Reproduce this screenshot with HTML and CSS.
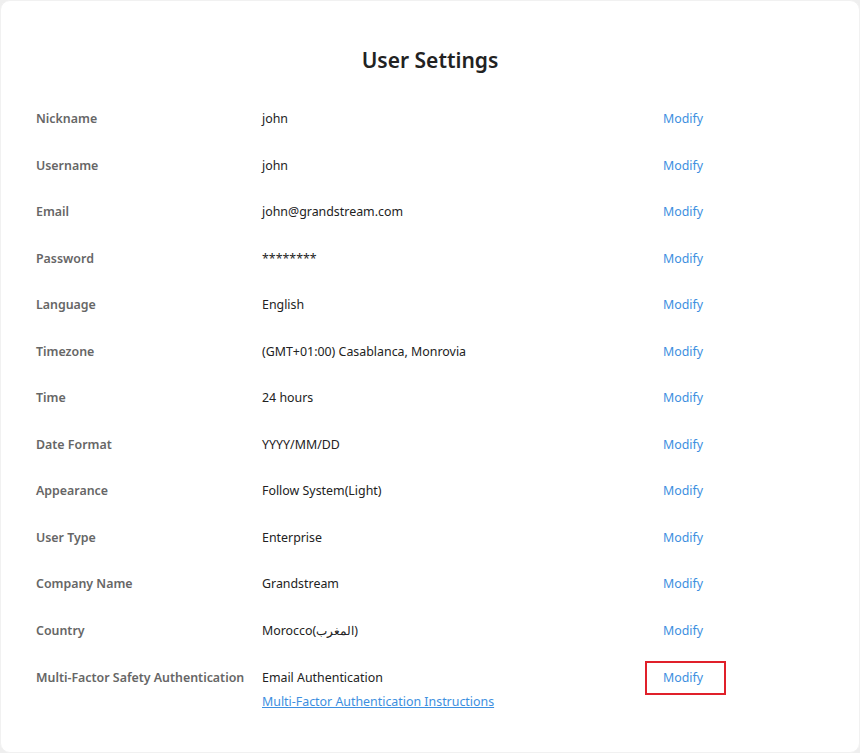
FILE: index.html
```html
<!DOCTYPE html>
<html lang="en">
<head>
<meta charset="utf-8">
<title>User Settings</title>
<link rel="stylesheet" href="styles.css">
</head>
<body>
<div class="card">
  <h1 class="title">User Settings</h1>
  <div class="rows">
    <div class="row"><div class="label">Nickname</div><div class="value">john</div><div class="action"><a class="modify">Modify</a></div></div>
    <div class="row"><div class="label">Username</div><div class="value">john</div><div class="action"><a class="modify">Modify</a></div></div>
    <div class="row"><div class="label">Email</div><div class="value">john@grandstream.com</div><div class="action"><a class="modify">Modify</a></div></div>
    <div class="row"><div class="label">Password</div><div class="value">********</div><div class="action"><a class="modify">Modify</a></div></div>
    <div class="row"><div class="label">Language</div><div class="value">English</div><div class="action"><a class="modify">Modify</a></div></div>
    <div class="row"><div class="label">Timezone</div><div class="value">(GMT+01:00) Casablanca, Monrovia</div><div class="action"><a class="modify">Modify</a></div></div>
    <div class="row"><div class="label">Time</div><div class="value">24 hours</div><div class="action"><a class="modify">Modify</a></div></div>
    <div class="row"><div class="label">Date Format</div><div class="value">YYYY/MM/DD</div><div class="action"><a class="modify">Modify</a></div></div>
    <div class="row"><div class="label">Appearance</div><div class="value">Follow System(Light)</div><div class="action"><a class="modify">Modify</a></div></div>
    <div class="row"><div class="label">User Type</div><div class="value">Enterprise</div><div class="action"><a class="modify">Modify</a></div></div>
    <div class="row"><div class="label">Company Name</div><div class="value">Grandstream</div><div class="action"><a class="modify">Modify</a></div></div>
    <div class="row"><div class="label">Country</div><div class="value">Morocco(<span dir="rtl">المغرب</span>)</div><div class="action"><a class="modify">Modify</a></div></div>
    <div class="row last"><div class="label">Multi-Factor Safety Authentication</div><div class="value"><div>Email Authentication</div><a class="doc-link">Multi-Factor Authentication Instructions</a></div><div class="action"><a class="modify highlighted">Modify</a></div></div>
  </div>
</div>
</body>
</html>
```

FILE: styles.css
```css
* { box-sizing: border-box; }
html, body { margin: 0; padding: 0; }
body {
  background: #efefef;
  font-family: "Noto Sans", "Open Sans", sans-serif;
  font-size: 12.4px;
  color: #333;
}
.card {
  width: 860px;
  height: 753px;
  background: #fff;
  border-radius: 10px;
  border: 1px solid #f1f1f1;
  padding: 0 0 0 35px;
  overflow: hidden;
}
.title {
  margin: 0;
  padding-top: 44px;
  height: 95px;
  line-height: 30px;
  font-size: 21px;
  font-weight: 600;
  color: #222;
  text-align: center;
  padding-right: 35px;
}
.rows {
  display: flex;
  flex-direction: column;
}
.row {
  display: grid;
  grid-template-columns: 226px 401px 1fr;
  padding: 13.25px 0;
  line-height: 20px;
}
.row.last { padding-top: 13.75px; }
.label {
  color: #666;
  font-weight: 600;
}
.value { color: #222; }
.modify {
  color: #3d8fe0;
  cursor: pointer;
}
.highlighted {
  position: relative;
}
.highlighted::after {
  content: "";
  position: absolute;
  left: -18px;
  right: -23px;
  top: -8px;
  bottom: -9px;
  border: 2px solid #e0202a;
}
.doc-link {
  display: block;
  margin-top: 4px;
  color: #3d8fe0;
  text-decoration: underline;
  cursor: pointer;
}
```
